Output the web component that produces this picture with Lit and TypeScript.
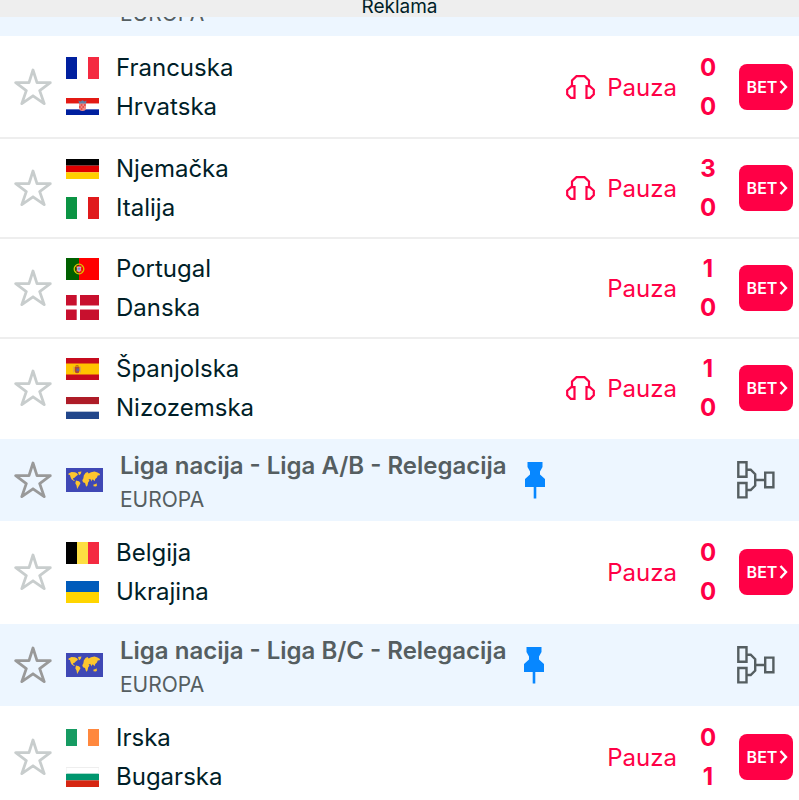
import { LitElement, html, svg, css, nothing } from "lit";
import { customElement, property } from "lit/decorators.js";

const stripes = (colors: string[], vertical: boolean, h: number) =>
  colors.map((c, i) =>
    vertical
      ? svg`<rect x=${i * 11} y="0" width="11" height=${h} fill=${c} />`
      : svg`<rect x="0" y=${(i * h) / colors.length} width="33" height=${h / colors.length} fill=${c} />`
  );

const flags: Record<string, { h: number; art: unknown }> = {
  fr: { h: 22, art: stripes(["#00209f", "#fff", "#f42a41"], true, 22) },
  hr: {
    h: 17,
    art: svg`${stripes(["#e31a14", "#fff", "#00209f"], false, 17)}
      <path d="M13 4h7v6q0 3-3.500 3T13 10z" fill="#ef8a86" />
      <path d="M12.500 2.500l2 1 2-1.300 2 1.300 2-1-.5 3h-7z" fill="#5f7fa6" />
      <path d="M14.700 6h1.700v2h-1.700zM18 6h1.700v2H18zM13 8h1.700v2H13zM16.400 8H18v2h-1.600zM14.700 10h1.700v2h-1.700z" fill="#e8504c" />`,
  },
  de: { h: 20, art: stripes(["#000", "#de0000", "#ffcf00"], false, 20) },
  it: { h: 22, art: stripes(["#0b9444", "#fff", "#e01a1c"], true, 22) },
  pt: {
    h: 22,
    art: svg`<rect width="33" height="22" fill="#ff0000" /><rect width="13" height="22" fill="#006000" />
      <circle cx="13" cy="11" r="4.800" fill="none" stroke="#d9c400" stroke-width="1.300" />
      <path d="M9 8l8 6M9 14l8-6" stroke="#d9c400" stroke-width=".7" />
      <path d="M10.500 7.800h5v4.200q0 2.600-2.500 2.600t-2.500-2.600z" fill="#e0202a" />
      <path d="M11.400 8.700h3.200v3.200q0 1.600-1.600 1.600t-1.600-1.600z" fill="#fff" />
      <path d="M12.400 9h1.200v4h-1.200zM11.500 10.300h3v1.100h-3z" fill="#6a80c8" />`,
  },
  dk: {
    h: 25,
    art: svg`<rect width="33" height="25" fill="#c8102e" /><path d="M10.700 0h3.300v10.500h19v4H14V25h-3.300V14.500H0v-4h10.700z" fill="#fff" />`,
  },
  es: {
    h: 22,
    art: svg`<rect width="33" height="22" fill="#c60b1e" /><rect y="5.500" width="33" height="11" fill="#ffc400" />
      <path d="M7.500 8.500v6M14.500 8.500v6" stroke="#d9a84a" stroke-width="1" />
      <path d="M8.700 9h4.800v4q0 2.200-2.400 2.200T8.700 13z" fill="#b1453a" />
      <path d="M8.700 8.500q2.400-2.500 4.800 0z" fill="#a3541f" /><circle cx="11.800" cy="11.800" r="1.500" fill="#64609b" />`,
  },
  nl: { h: 22, art: stripes(["#ae1c28", "#fff", "#21468b"], false, 22) },
  be: { h: 22, art: stripes(["#000", "#fddf42", "#f42a41"], true, 22) },
  ua: { h: 22, art: stripes(["#005bbb", "#ffd500"], false, 22) },
  ie: { h: 17, art: stripes(["#169b62", "#fff", "#ff883e"], true, 17) },
  bg: {
    h: 20,
    art: svg`${stripes(["#fff", "#00966e", "#d62612"], false, 20)}<path d="M0 7V.500h33V7" fill="none" stroke="#eee" />`,
  },
};

const flag = (code: string) =>
  html`<svg class="flag" width="33" height=${flags[code].h} viewBox="0 0 33 ${flags[code].h}" aria-hidden="true">${flags[code].art}</svg>`;

const star = html`<svg class="star" width="38" height="38" viewBox="0 0 38 38" aria-hidden="true">
  <path d="M19 2l4 12.600 13.300.100L25.700 22.600l4.500 13L19 27.800 7.800 35.600l4.500-13L1.700 14.700l13.300-.100z" fill="none" stroke="currentColor" stroke-width="2.800" stroke-linejoin="round" />
</svg>`;

const headphones = html`<svg width="29" height="24" viewBox="0 0 29 24" role="img" aria-label="Audio prijenos">
  <path d="M6 11V5.500L10.500 1.200h8L23 5.500V11M8.500 11.200H5.200L1.200 14.800v4.400L4.800 22.800h3.700zM20.500 11.200h3.300l4 3.600v4.400l-3.600 3.600h-3.700z" fill="none" stroke="currentColor" stroke-width="2.200" />
</svg>`;

const worldMap = html`<svg width="37" height="24" viewBox="0 0 37 24" aria-hidden="true">
  <rect width="37" height="24" fill="#3f48b5" />
  <path d="M2.500 5.500l3-1.500 3.500.3 2 1 1 1.500-2 1.500-1.500 1.500-1.500.5.5 1.500 1.500 1-1 .3-2.500-1.800L4.500 9 4 7l-1.500-.3zM12 4l3.500-.6-.8 2.600-1.700 1.200zM10 12.500l3 .7 1.500 1.800-1 2-1.500 2.500-.8 1.500-.7-3.500-1.200-2.300zM17.500 9.500l.3-2L19.500 5l2-1 1.200 1.500L25 4.200l3.500-.7 3 1L34 6l-.3 1.300-2 .2-.7 2-1.700 1.500-.8 2.300-1.500-1.800-1 .3-.5 1.700-1.200-2.500-1.800.5 1 1.300-1.300 1.500-.7 3.200-1.300 1.200-1.200-3.700-2-.7-.7-2 1-1.800zM27.500 16.500l1.700-.3 1.300-1 .5 2.300-1 1-2.500-.3z" fill="#fdc62e" />
</svg>`;

const pin = html`<svg class="pin" width="20" height="37" viewBox="0 0 20 37" role="img" aria-label="Prikvačeno">
  <path d="M2.500 0h15v5L15 9.500v3L20 17v8h-8.700v11.500H8.700V25H0v-8l5-4.500v-3L2.500 5z" fill="currentColor" />
</svg>`;

const bracket = html`<svg width="38" height="38" viewBox="0 0 38 38" aria-hidden="true">
  <path d="M1.300 1.300h8.200v14.400H1.300zM1.300 22h8.200v14.400H1.300zM28.200 11.600h8.200v14.600h-8.200zM10 8.700h3.700l4.500 4.500v11.300L13.700 29H10M18 19h10" fill="none" stroke="currentColor" stroke-width="2.400" />
</svg>`;

interface Match {
  teams: [string, string][];
  score: [number, number];
  audio?: boolean;
}

@customElement("match-row")
class MatchRow extends LitElement {
  @property({ attribute: false }) match!: Match;

  static styles = css`
    :host { display: flex; align-items: center; box-sizing: border-box; height: 100px; padding: 0 6px 0 14px; color: #001e28; }
    button { font: inherit; border: 0; padding: 0; background: none; cursor: pointer; }
    .fav { display: flex; color: #c8cdcd; margin-right: 14px; }
    .teams { flex: 1; display: flex; flex-direction: column; }
    .team { display: flex; align-items: center; gap: 17px; height: 39px; font-size: 24px; }
    .status { display: flex; align-items: center; gap: 12px; color: #ff0046; font-size: 24px; }
    .score { width: 62px; text-align: center; color: #ff0046; font-size: 24px; font-weight: 700; line-height: 39px; }
    .bet { display: flex; align-items: center; justify-content: center; gap: 2px; width: 54px; height: 46px; padding-left: 3px; border-radius: 8px; background: #ff0046; color: #fff; font-size: 16px; font-weight: 600; }
  `;

  render() {
    const m = this.match;
    return html`
      <button class="fav" aria-label="Dodaj u favorite">${star}</button>
      <div class="teams">${m.teams.map(([code, name]) => html`<div class="team">${flag(code)}<span>${name}</span></div>`)}</div>
      <div class="status">${m.audio ? headphones : nothing}<span>Pauza</span></div>
      <div class="score">${m.score.map((s) => html`<div>${s}</div>`)}</div>
      <button class="bet">BET<svg width="9" height="14" viewBox="0 0 9 14" aria-hidden="true"><path d="M1.500 1l5.500 6-5.500 6" fill="none" stroke="currentColor" stroke-width="2.400" /></svg></button>
    `;
  }
}

@customElement("league-header")
class LeagueHeader extends LitElement {
  @property() name = "";

  static styles = css`
    :host { display: flex; align-items: center; height: 82px; padding: 0 24px 0 14px; background: #edf6ff; color: #555e61; }
    button { border: 0; padding: 0; background: none; cursor: pointer; }
    .fav { display: flex; color: #999; margin-right: 14px; }
    .text { margin-left: 17px; padding-top: 5px; }
    .name { margin: 0; font-size: 24px; font-weight: 600; line-height: 34px; }
    .area { font-size: 21px; line-height: 34px; }
    .pin { color: #0787ff; margin-left: 18px; }
    .draw { display: flex; margin-left: auto; color: inherit; }
  `;

  render() {
    return html`
      <button class="fav" aria-label="Dodaj u favorite">${star}</button>
      ${worldMap}
      <div class="text"><h2 class="name">${this.name}</h2><div class="area">EUROPA</div></div>
      ${pin}
      <button class="draw" aria-label="Ždrijeb">${bracket}</button>
    `;
  }
}

const groups: { league?: string; matches: Match[] }[] = [
  {
    matches: [
      { teams: [["fr", "Francuska"], ["hr", "Hrvatska"]], score: [0, 0], audio: true },
      { teams: [["de", "Njemačka"], ["it", "Italija"]], score: [3, 0], audio: true },
      { teams: [["pt", "Portugal"], ["dk", "Danska"]], score: [1, 0] },
      { teams: [["es", "Španjolska"], ["nl", "Nizozemska"]], score: [1, 0], audio: true },
    ],
  },
  { league: "Liga nacija - Liga A/B - Relegacija", matches: [{ teams: [["be", "Belgija"], ["ua", "Ukrajina"]], score: [0, 0] }] },
  { league: "Liga nacija - Liga B/C - Relegacija", matches: [{ teams: [["ie", "Irska"], ["bg", "Bugarska"]], score: [0, 1] }] },
];

@customElement("app-root")
class AppRoot extends LitElement {
  static styles = css`
    :host { display: block; height: 100vh; overflow: hidden; background: #fff; font-family: Inter, "Noto Sans", sans-serif; }
    .ad { height: 17px; line-height: 14px; background: #eee; color: #001e28; text-align: center; font-size: 19px; }
    .clipped { display: flex; align-items: flex-end; height: 19px; overflow: hidden; padding-left: 120px; background: #edf6ff; color: #555e61; font-size: 21px; line-height: 44px; }
    .matches { padding: 1px 0 2px; }
    match-row + match-row { border-top: 2px solid #eee; }
  `;

  render() {
    return html`
      <div class="ad">Reklama</div>
      <div class="clipped">EUROPA</div>
      ${groups.map(
        (g) => html`<section>
          ${g.league ? html`<league-header .name=${g.league}></league-header>` : nothing}
          <div class="matches">${g.matches.map((m) => html`<match-row .match=${m}></match-row>`)}</div>
        </section>`
      )}
    `;
  }
}
